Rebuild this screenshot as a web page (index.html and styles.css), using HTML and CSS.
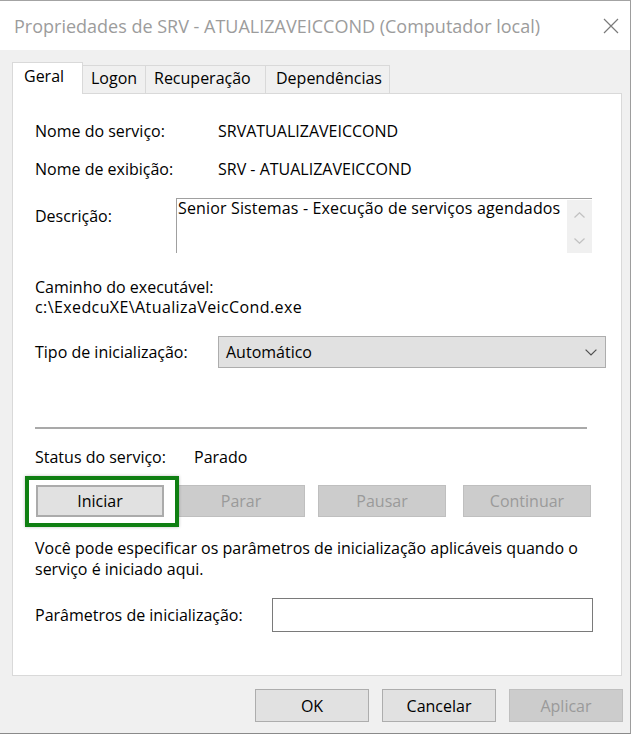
FILE: index.html
```html
<!DOCTYPE html>
<html lang="pt-BR">
<head>
<meta charset="utf-8">
<title>Propriedades de SRV - ATUALIZAVEICCOND</title>
<link rel="stylesheet" href="styles.css">
</head>
<body>
<div class="window">
  <header class="titlebar">
    <span class="title">Propriedades de SRV - ATUALIZAVEICCOND (Computador local)</span>
    <svg class="close" width="16" height="16" viewBox="0 0 16 16"><path d="M1 1L15 15M15 1L1 15" stroke="#7a7a7a" stroke-width="1.2" fill="none"/></svg>
  </header>
  <div class="client">
    <nav class="tabs">
      <div class="tab active tab-geral">Geral</div>
      <div class="tab tab-logon">Logon</div>
      <div class="tab tab-rec">Recuperação</div>
      <div class="tab tab-dep">Dependências</div>
    </nav>
    <section class="panel">
      <div class="row row-name"><span class="label label-main">Nome do serviço:</span><span>SRVATUALIZAVEICCOND</span></div>
      <div class="row row-disp"><span class="label label-main">Nome de exibição:</span><span>SRV - ATUALIZAVEICCOND</span></div>
      <div class="row row-desc">
        <span class="label label-desc">Descrição:</span>
        <div class="descbox">
          <div class="desc-text">Senior Sistemas - Execução de serviços agendados</div>
          <div class="vscroll">
            <svg width="11" height="6" viewBox="0 0 11 6"><path d="M0.5 5.5L5.5 0.8L10.5 5.5" stroke="#c2c2c2" stroke-width="1.3" fill="none"/></svg>
            <svg width="11" height="6" viewBox="0 0 11 6"><path d="M0.5 0.5L5.5 5.2L10.5 0.5" stroke="#c2c2c2" stroke-width="1.3" fill="none"/></svg>
          </div>
        </div>
      </div>
      <div class="path-block">
        <div>Caminho do executável:</div>
        <div class="path">c:\ExedcuXE\AtualizaVeicCond.exe</div>
      </div>
      <div class="row row-type">
        <span class="label label-main">Tipo de inicialização:</span>
        <div class="combo"><span>Automático</span>
          <svg width="12" height="7" viewBox="0 0 12 7"><path d="M0.6 0.6L6 6L11.4 0.6" stroke="#505050" stroke-width="1.2" fill="none"/></svg>
        </div>
      </div>
      <div class="sep"></div>
      <div class="row row-status"><span class="label label-status">Status do serviço:</span><span>Parado</span></div>
      <div class="btnrow">
        <div class="start-wrap">
          <div class="btn btn-svc btn-focus">Iniciar</div>
          <span class="highlight"></span>
        </div>
        <div class="btn btn-svc disabled">Parar</div>
        <div class="btn btn-svc disabled">Pausar</div>
        <div class="btn btn-svc disabled btn-cont">Continuar</div>
      </div>
      <p class="hint">Você pode especificar os parâmetros de inicialização aplicáveis quando o<br>serviço é iniciado aqui.</p>
      <div class="row row-params"><span class="label label-params">Parâmetros de inicialização:</span><div class="input"></div></div>
    </section>
    <footer class="footer">
      <div class="btn btn-dlg">OK</div>
      <div class="btn btn-dlg">Cancelar</div>
      <div class="btn btn-dlg disabled">Aplicar</div>
    </footer>
  </div>
</div>
</body>
</html>
```
FILE: styles.css
```css
html, body {
  margin: 0;
  padding: 0;
  background: #f0f0f0;
}
body {
  font-family: "Open Sans", "Noto Sans", sans-serif;
  font-size: 16px;
  line-height: 20px;
  color: #000;
}
.window {
  width: 631px;
  height: 734px;
  box-sizing: border-box;
  border-top: 1px solid #a3a3a3;
  border-right: 1px solid #9d9d9d;
  border-bottom: 1px solid #8a8a8a;
  background: #f0f0f0;
  display: flex;
  flex-direction: column;
  overflow: hidden;
}
.titlebar {
  height: 49px;
  flex: none;
  background: #fff;
  display: flex;
  align-items: center;
  padding-left: 14px;
}
.title {
  font-size: 18px;
  line-height: 24px;
  color: #9c9c9c;
  white-space: nowrap;
}
.close {
  margin-left: auto;
  margin-right: 11px;
}
.client {
  flex: 1;
  display: flex;
  flex-direction: column;
}
.tabs {
  display: flex;
  align-items: flex-end;
  padding: 12px 0 0 12px;
}
.tab {
  box-sizing: border-box;
  height: 29px;
  padding: 2px 0 0 8px;
  border: 1px solid #d9d9d9;
  border-bottom: none;
  background: #f0f0f0;
  margin-left: -1px;
  white-space: nowrap;
}
.tab.active {
  position: relative;
  z-index: 2;
  height: 32px;
  padding: 3px 0 0 11px;
  background: #fff;
  margin-left: 0;
}
.tab-geral { width: 71px; }
.tab-logon { width: 64px; }
.tab-rec { width: 121px; }
.tab-dep { width: 125px; padding-left: 10px; }
.panel {
  position: relative;
  z-index: 1;
  margin: -1px 0 0 12px;
  width: 610px;
  height: 583px;
  box-sizing: border-box;
  border: 1px solid #d9d9d9;
  background: #fff;
  padding-left: 22px;
  display: flex;
  flex-direction: column;
}
.row {
  display: flex;
  align-items: center;
  white-space: nowrap;
}
.label { flex: none; }
.label-main { width: 183px; }
.label-desc { width: 141px; padding-top: 8px; align-self: flex-start; }
.label-status { width: 159px; }
.label-params { width: 237px; }
.row-name { margin-top: 27px; }
.row-disp { margin-top: 18px; }
.row-desc { margin-top: 19px; align-items: flex-start; }
.descbox {
  width: 416px;
  height: 55px;
  box-sizing: border-box;
  border-top: 1px solid #a0a0a0;
  border-left: 1px solid #a0a0a0;
  display: flex;
}
.desc-text {
  flex: 1;
  line-height: 18px;
  padding-left: 1px;
  letter-spacing: 0.15px;
}
.vscroll {
  width: 25px;
  margin-top: 1px;
  background: #f0f0f0;
  display: flex;
  flex-direction: column;
  align-items: center;
  justify-content: space-between;
  padding: 12px 0 9px;
  box-sizing: border-box;
}
.vscroll svg { display: block; }
.path-block { margin-top: 24px; }
.path { letter-spacing: 0.4px; }
.row-type { margin-top: 19px; }
.combo {
  width: 388px;
  height: 32px;
  box-sizing: border-box;
  background: #e1e1e1;
  border: 1px solid #adadad;
  display: flex;
  align-items: center;
  justify-content: space-between;
  padding: 0 8px 0 7px;
}
.sep {
  margin-top: 59px;
  width: 552px;
  height: 2px;
  background: #a9a9a9;
}
.row-status { margin-top: 18px; }
.btnrow {
  margin-top: 18px;
  display: flex;
  gap: 13px;
  padding-left: 1px;
}
.btn {
  box-sizing: border-box;
  height: 32px;
  display: flex;
  align-items: center;
  justify-content: center;
  background: #e1e1e1;
  border: 1px solid #adadad;
  white-space: nowrap;
}
.btn-focus {
  border: 2px solid #ababab;
}
.btn.disabled {
  background: #cccccc;
  border-color: #bfbfbf;
  color: #9a9a9a;
}
.btn-svc { width: 128px; }
.btn-cont { margin-left: 4px; }
.start-wrap { position: relative; }
.highlight {
  position: absolute;
  left: -11px;
  top: -9px;
  width: 154px;
  height: 51px;
  box-sizing: border-box;
  border: 4px solid #0f7f12;
  box-shadow: 0 0 3px rgba(0, 0, 0, 0.25);
}
.hint {
  margin: 21px 0 0;
  line-height: 21px;
}
.row-params { margin-top: 18px; }
.input {
  width: 321px;
  height: 34px;
  box-sizing: border-box;
  border: 1px solid #7a7a7a;
  background: #fff;
}
.footer {
  display: flex;
  justify-content: flex-end;
  gap: 13px;
  margin-top: 13px;
  padding-right: 7px;
}
.btn-dlg { width: 114px; height: 33px; }
```
